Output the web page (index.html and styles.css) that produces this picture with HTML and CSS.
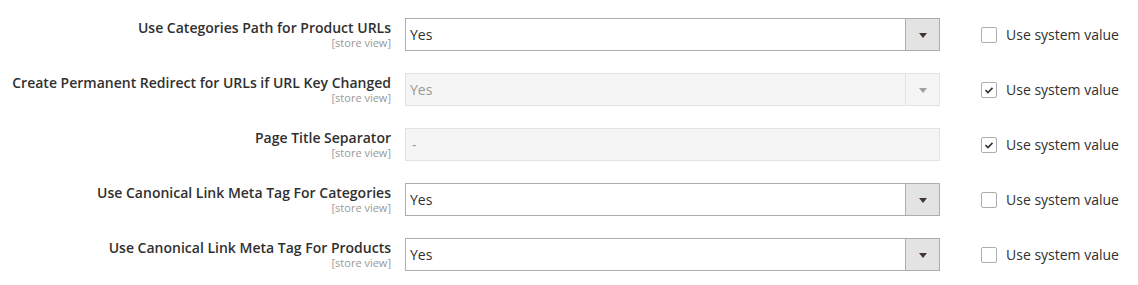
FILE: index.html
```html
<!DOCTYPE html>
<html>
<head>
<meta charset="utf-8">
<link rel="stylesheet" href="styles.css">
</head>
<body>
<div class="form">
  <div class="row">
    <div class="label"><span class="title">Use Categories Path for Product URLs</span><span class="scope">[store view]</span></div>
    <div class="control"><div class="select"><span class="value">Yes</span><span class="btn"><span class="arrow"></span></span></div></div>
    <div class="sys"><span class="cb"></span><span class="sys-text">Use system value</span></div>
  </div>
  <div class="row">
    <div class="label"><span class="title">Create Permanent Redirect for URLs if URL Key Changed</span><span class="scope">[store view]</span></div>
    <div class="control"><div class="select disabled"><span class="value">Yes</span><span class="btn"><span class="arrow"></span></span></div></div>
    <div class="sys"><span class="cb checked"><svg viewBox="0 0 16 16" width="16" height="16"><path d="M4 8.2 L6.8 11 L12 5.6" fill="none" stroke="#333" stroke-width="1.8"/></svg></span><span class="sys-text">Use system value</span></div>
  </div>
  <div class="row">
    <div class="label"><span class="title">Page Title Separator</span><span class="scope">[store view]</span></div>
    <div class="control"><div class="input disabled"><span class="value">-</span></div></div>
    <div class="sys"><span class="cb checked"><svg viewBox="0 0 16 16" width="16" height="16"><path d="M4 8.2 L6.8 11 L12 5.6" fill="none" stroke="#333" stroke-width="1.8"/></svg></span><span class="sys-text">Use system value</span></div>
  </div>
  <div class="row">
    <div class="label"><span class="title">Use Canonical Link Meta Tag For Categories</span><span class="scope">[store view]</span></div>
    <div class="control"><div class="select"><span class="value">Yes</span><span class="btn"><span class="arrow"></span></span></div></div>
    <div class="sys"><span class="cb"></span><span class="sys-text">Use system value</span></div>
  </div>
  <div class="row">
    <div class="label"><span class="title">Use Canonical Link Meta Tag For Products</span><span class="scope">[store view]</span></div>
    <div class="control"><div class="select"><span class="value">Yes</span><span class="btn"><span class="arrow"></span></span></div></div>
    <div class="sys"><span class="cb"></span><span class="sys-text">Use system value</span></div>
  </div>
</div>
</body>
</html>
```
FILE: styles.css
```css
html, body {
  margin: 0;
  padding: 0;
  background: #fff;
  font-family: "Open Sans", "DejaVu Sans", sans-serif;
  color: #303030;
}
.form {
  display: flex;
  flex-direction: column;
  gap: 22px;
  padding-top: 18px;
}
.row {
  display: flex;
  align-items: flex-start;
  height: 33px;
}
.label {
  width: 391px;
  box-sizing: border-box;
  padding-right: 0;
  display: flex;
  flex-direction: column;
  align-items: flex-end;
  text-align: right;
  padding-top: 1px;
}
.title {
  font-size: 14px;
  font-weight: 600;
  line-height: 17px;
  color: #303030;
}
.scope {
  font-size: 11px;
  line-height: 13px;
  color: #999;
}
.control {
  margin-left: 14px;
  width: 535px;
}
.select, .input {
  box-sizing: border-box;
  height: 33px;
  border: 1px solid #adadad;
  background: #fff;
  display: flex;
  align-items: center;
  font-size: 14px;
  color: #303030;
}
.value {
  flex: 1;
  padding-left: 4px;
  line-height: 31px;
}
.btn {
  width: 33px;
  height: 31px;
  background: #e3e3e3;
  border-left: 1px solid #adadad;
  display: flex;
  align-items: center;
  justify-content: center;
}
.arrow {
  width: 0;
  height: 0;
  border-left: 4px solid transparent;
  border-right: 4px solid transparent;
  border-top: 5px solid #41362f;
  margin-top: 1px;
}
.select.disabled, .input.disabled {
  background: #f5f5f5;
  border-color: #e3e3e3;
  color: #999;
}
.select.disabled .btn {
  background: #f5f5f5;
  border-left-color: #e3e3e3;
}
.select.disabled .arrow {
  border-top-color: #a0a0a0;
}
.input.disabled .value {
  padding-left: 6px;
  color: #999;
}
.sys {
  margin-left: 41px;
  display: flex;
  align-items: center;
  height: 33px;
}
.cb {
  box-sizing: border-box;
  width: 16px;
  height: 16px;
  border: 1px solid #adadad;
  border-radius: 2px;
  background: #fff;
  display: flex;
  align-items: center;
  justify-content: center;
  margin-top: 1px;
}
.cb svg {
  display: block;
}
.sys-text {
  margin-left: 9px;
  font-size: 14px;
  color: #303030;
}
```
